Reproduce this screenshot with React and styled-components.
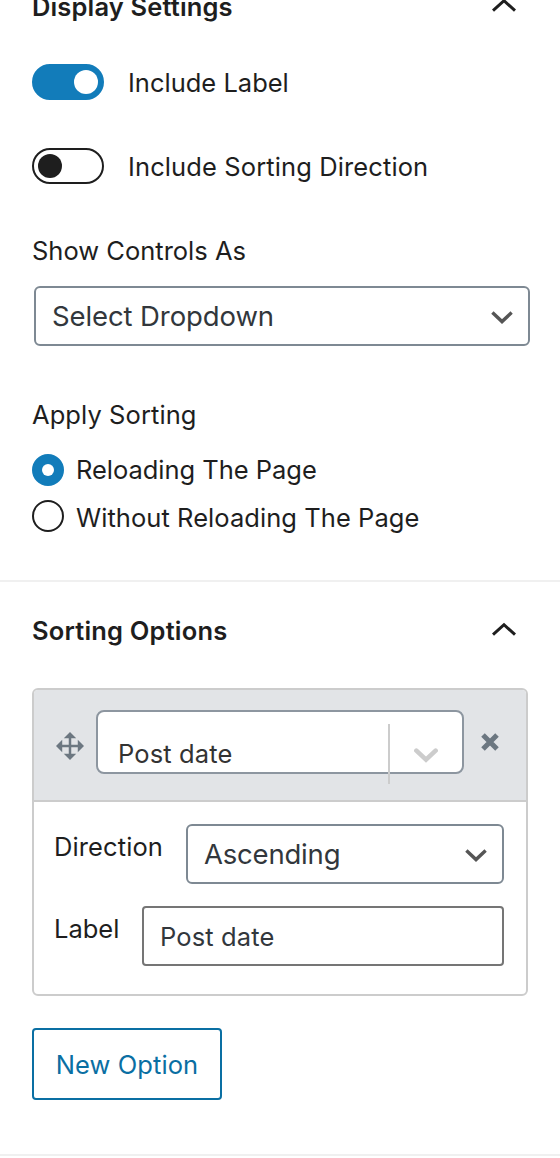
import React, { useState } from "react";
import styled, { createGlobalStyle } from "styled-components";

const GlobalStyle = createGlobalStyle`
  * {
    box-sizing: border-box;
  }

  body {
    margin: 0;
    background: #fff;
    color: #1e1e1e;
    font-family: Inter, "Liberation Sans", sans-serif;
    font-size: 25.5px;
    line-height: 36px;
  }
`;

const Sidebar = styled.div`
  width: 560px;
  height: 1158px;
  overflow: hidden;
`;

/* the first panel is scrolled partly out of view */
const Panel = styled.section`
  height: ${(p) => p.$height}px;
  margin-top: ${(p) => (p.$scrolled ? -42 : 0)}px;
  padding: 0 32px;
  border-bottom: 2px solid #f0f0f0;
`;

const PanelHeader = styled.div`
  display: flex;
  align-items: center;
  justify-content: space-between;
  height: 96px;
  padding-right: 12px;
  margin-bottom: 10px;
`;

const PanelTitle = styled.h2`
  margin: 2px 0 0;
  font-size: 25.5px;
  font-weight: 600;
`;

const Text = styled.span`
  white-space: nowrap;
  letter-spacing: ${(p) => p.$spacing || 0}px;
`;

const ToggleRow = styled.label`
  display: flex;
  align-items: center;
  gap: 24px;
  height: 36px;
  margin-bottom: 48px;
`;

const ToggleLabel = styled(Text)`
  padding-top: 2px;
`;

const Track = styled.span`
  display: flex;
  align-items: center;
  justify-content: ${(p) => (p.$on ? "flex-end" : "flex-start")};
  width: 72px;
  height: 36px;
  padding: 0 4px;
  border: 2px solid ${(p) => (p.$on ? "#127cba" : "#1e1e1e")};
  border-radius: 18px;
  background: ${(p) => (p.$on ? "#127cba" : "#fff")};
`;

const Knob = styled.span`
  width: 24px;
  height: 24px;
  border-radius: 50%;
  background: ${(p) => (p.$on ? "#fff" : "#1e1e1e")};
`;

const FieldLabel = styled.div`
  height: 36px;
  margin-top: ${(p) => p.$top || 0}px;
  margin-bottom: ${(p) => p.$gap}px;
`;

const Select = styled.div`
  display: flex;
  align-items: center;
  justify-content: space-between;
  flex: 1;
  height: 60px;
  padding: 0 15px 0 16px;
  border: 2px solid #7e8993;
  border-radius: 6px;
  color: #32373c;
  font-size: 27.5px;

  svg {
    margin-top: 2px;
  }
`;

const MainSelect = styled(Select)`
  width: 496px;
  margin: 0 0 51px 2px;
`;

const RadioRow = styled.label`
  display: flex;
  align-items: flex-start;
  gap: 12px;
  height: ${(p) => p.$height}px;
  line-height: ${(p) => p.$line}px;
`;

const Radio = styled.span`
  display: flex;
  align-items: center;
  justify-content: center;
  width: 32px;
  height: 32px;
  border: 2px solid ${(p) => (p.$on ? "#127cba" : "#1e1e1e")};
  border-radius: 50%;
  background: ${(p) => (p.$on ? "#127cba" : "#fff")};

  &::before {
    content: "";
    width: 12px;
    height: 12px;
    border-radius: 50%;
    background: #fff;
  }
`;

const OptionCard = styled.div`
  width: 496px;
  height: 308px;
  border: 2px solid #ccc;
  border-radius: 6px;
`;

const CardHeader = styled.div`
  display: flex;
  align-items: flex-start;
  height: 112px;
  padding: 20px 0 0 22px;
  border-bottom: 2px solid #ccc;
  border-radius: 4px 4px 0 0;
  background: #e2e4e7;
  color: #6c7781;
`;

const MoveIcon = styled.svg`
  width: 28px;
  height: 28px;
  margin: 22px 12px 0 0;
`;

const RemoveIcon = styled.svg`
  width: 18px;
  height: 18px;
  margin: 23px 0 0 17px;
`;

const FieldSelect = styled.div`
  display: flex;
  width: 368px;
  height: 64px;
  padding: 12px 0 0 20px;
  border: 2px solid #8d96a0;
  border-radius: 8px;
  background: #fff;
  color: #333;
`;

const FieldValue = styled.div`
  flex: 1;
  padding-top: 12px;
`;

const Separator = styled.div`
  width: 2px;
  height: 60px;
  background: #ccc;
`;

const Indicator = styled.div`
  display: flex;
  align-items: center;
  justify-content: center;
  width: 72px;
  height: 62px;
`;

const CardBody = styled.div`
  padding: 22px 22px 22px 20px;
`;

const CardRow = styled.div`
  display: flex;
  align-items: flex-start;
  gap: 22px;
  height: 60px;
  margin-bottom: 22px;
`;

const RowLabel = styled.div`
  width: ${(p) => p.$width}px;
  padding-top: 5px;
`;

const TextField = styled.div`
  display: flex;
  align-items: center;
  flex: 1;
  height: 60px;
  padding: 2px 16px 0;
  border: 2px solid #757575;
  border-radius: 4px;
  color: #32373c;
`;

const NewButton = styled.button`
  width: 190px;
  height: 72px;
  margin-top: 32px;
  padding: 2px 0 0;
  border: 2px solid #0a6fa3;
  border-radius: 4px;
  background: #fff;
  color: #0a6fa3;
  font: inherit;
`;

const CollapseIcon = () => (
  <svg width="24" height="16" viewBox="0 0 24 16" fill="none">
    <path d="M1 12.7L12 2.7L23 12.7" stroke="#1e1e1e" strokeWidth="3" />
  </svg>
);

const SelectArrow = () => (
  <svg width="22" height="13" viewBox="0 0 22 13" fill="none">
    <path d="M1.4 1.6L11 10.6L20.6 1.6" stroke="#555" strokeWidth="3.4" />
  </svg>
);

const Toggle = ({ label, spacing, initial }) => {
  const [on, setOn] = useState(initial);
  return (
    <ToggleRow onClick={() => setOn(!on)}>
      <Track $on={on}>
        <Knob $on={on} />
      </Track>
      <ToggleLabel $spacing={spacing}>{label}</ToggleLabel>
    </ToggleRow>
  );
};

const App = () => {
  const [reload, setReload] = useState(true);

  return (
    <>
      <GlobalStyle />
      <Sidebar>
        <Panel $height={624} $scrolled>
          <PanelHeader>
            <PanelTitle>
              <Text $spacing={0.14}>Display Settings</Text>
            </PanelTitle>
            <CollapseIcon />
          </PanelHeader>
          <Toggle label="Include Label" initial />
          <Toggle label="Include Sorting Direction" spacing={0.11} initial={false} />
          <FieldLabel $top={49} $gap={17}>
            <Text>Show Controls As</Text>
          </FieldLabel>
          <MainSelect>
            <Text $spacing={-0.1}>Select Dropdown</Text>
            <SelectArrow />
          </MainSelect>
          <FieldLabel $gap={21}>
            <Text $spacing={0.08}>Apply Sorting</Text>
          </FieldLabel>
          <RadioRow $height={46} $line={32} onClick={() => setReload(true)}>
            <Radio $on={reload} />
            <Text $spacing={-0.03}>Reloading The Page</Text>
          </RadioRow>
          <RadioRow $height={36} $line={36} onClick={() => setReload(false)}>
            <Radio $on={!reload} />
            <Text $spacing={0.06}>Without Reloading The Page</Text>
          </RadioRow>
        </Panel>

        <Panel $height={574}>
          <PanelHeader>
            <PanelTitle>
              <Text $spacing={0.18}>Sorting Options</Text>
            </PanelTitle>
            <CollapseIcon />
          </PanelHeader>
          <OptionCard>
            <CardHeader>
              <MoveIcon viewBox="1 1 18 18">
                <path
                  fill="currentColor"
                  d="M19 10l-4 4v-3.2h-4.2v4.2h3.2l-4 4-4-4h3.2v-4.2H5v3.2l-4-4 4-4v3.2h4.2V5H6l4-4 4 4h-3.2v4.2h4.2V6z"
                />
              </MoveIcon>
              <FieldSelect>
                <FieldValue>
                  <Text $spacing={0.12}>Post date</Text>
                </FieldValue>
                <Separator />
                <Indicator>
                  <svg width="24" height="15" viewBox="0 0 24 15" fill="none">
                    <path
                      d="M2.4 2.6L12 11.6L21.6 2.6"
                      stroke="#ccc"
                      strokeWidth="4.6"
                      strokeLinecap="round"
                    />
                  </svg>
                </Indicator>
              </FieldSelect>
              <RemoveIcon viewBox="0 0 18 18">
                <path d="M2 2L16 16M16 2L2 16" stroke="currentColor" strokeWidth="5" />
              </RemoveIcon>
            </CardHeader>
            <CardBody>
              <CardRow>
                <RowLabel $width={110}>
                  <Text $spacing={0.1}>Direction</Text>
                </RowLabel>
                <Select>
                  <Text $spacing={-0.2}>Ascending</Text>
                  <SelectArrow />
                </Select>
              </CardRow>
              <CardRow>
                <RowLabel $width={66}>
                  <Text>Label</Text>
                </RowLabel>
                <TextField>
                  <Text $spacing={0.12}>Post date</Text>
                </TextField>
              </CardRow>
            </CardBody>
          </OptionCard>
          <NewButton>
            <Text $spacing={0.08}>New Option</Text>
          </NewButton>
        </Panel>
      </Sidebar>
    </>
  );
};

export default App;
